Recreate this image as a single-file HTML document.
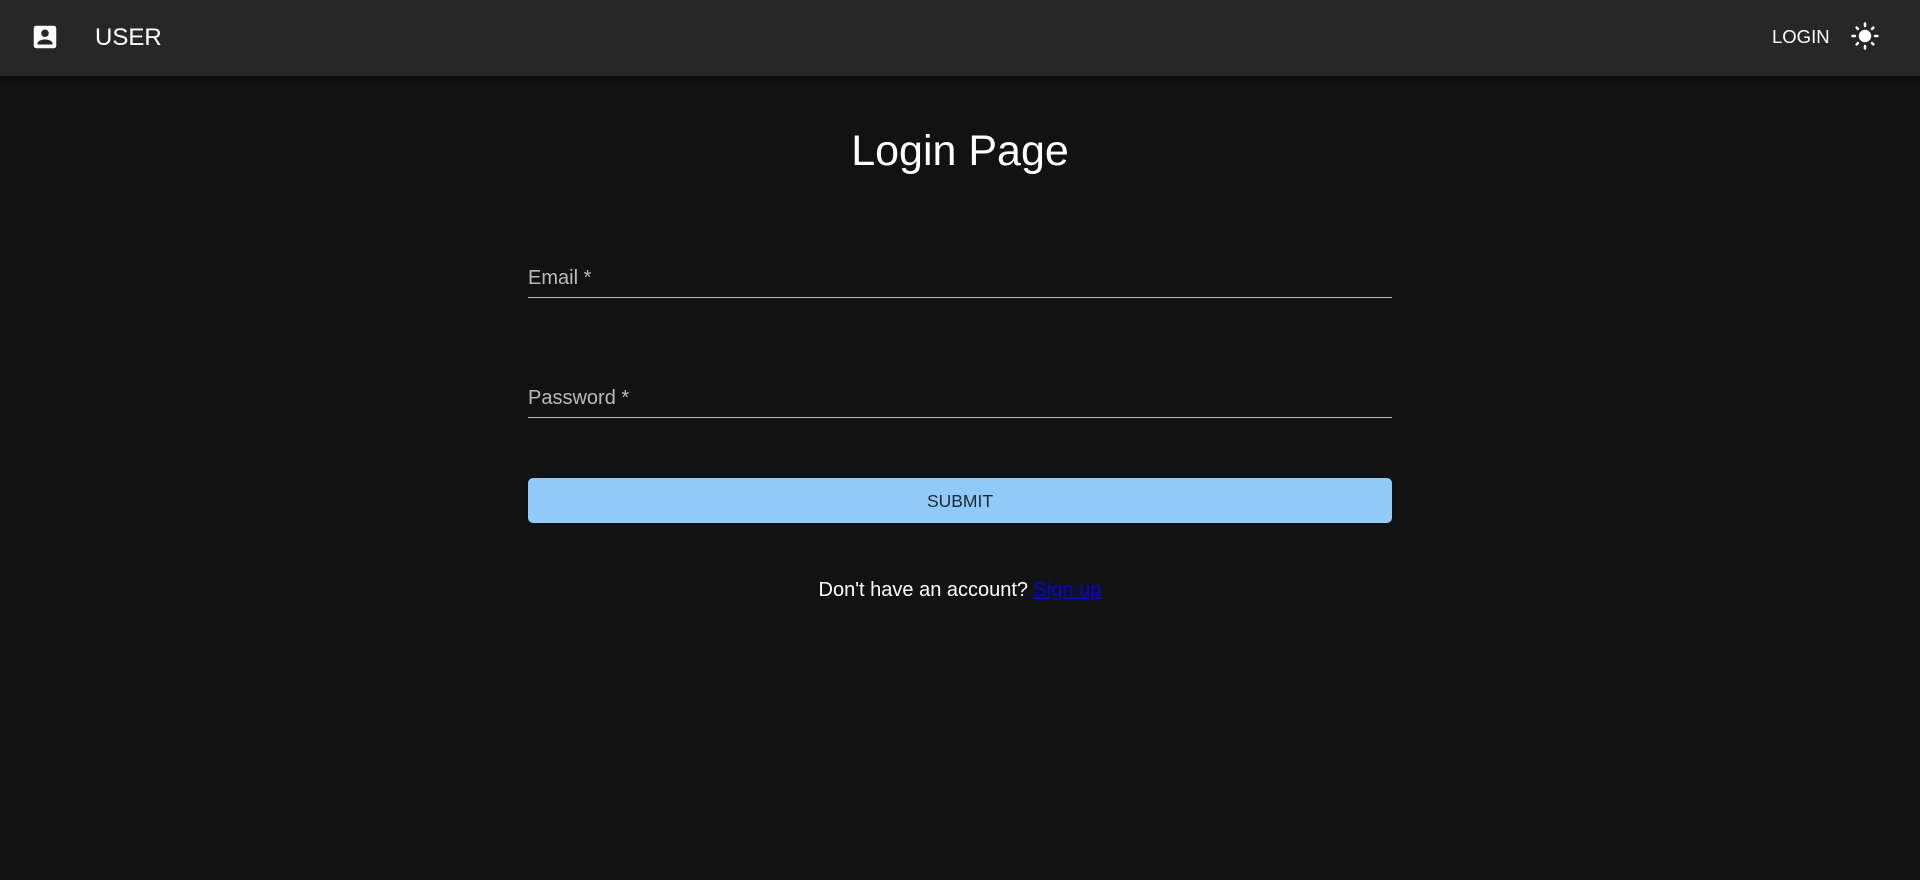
<!DOCTYPE html>
<html><head><meta charset="utf-8"><style>
*{margin:0;padding:0;box-sizing:border-box}
body{width:1920px;height:880px;background:#121212;font-family:"Liberation Sans",Arial,sans-serif;color:#fff;overflow:hidden;position:relative}
.hdr{position:absolute;left:0;top:0;width:1920px;height:76px;background:#272727;box-shadow:0 2px 5px rgba(0,0,0,.5)}
.abs{position:absolute;white-space:nowrap}
.lbl{color:rgba(255,255,255,.7);font-size:20px}
.line{position:absolute;left:528px;width:864px;height:1px;background:rgba(255,255,255,.7)}
</style></head><body>
<div class="hdr">
<svg class="abs" style="left:30px;top:22px" width="30" height="30" viewBox="0 0 24 24"><path fill="#fff" d="M3 5v14a2 2 0 0 0 2 2h14c1.1 0 2-.9 2-2V5c0-1.1-.9-2-2-2H5a2 2 0 0 0-2 2zm12 4c0 1.66-1.34 3-3 3s-3-1.34-3-3 1.34-3 3-3 3 1.34 3 3zm-9 8c0-2 4-3.1 6-3.1s6 1.1 6 3.1v1H6v-1z"/></svg>
<div class="abs" style="left:95px;top:24px;font-size:24px;line-height:28px">USER</div>
<div class="abs" style="left:1772px;top:25px;font-size:18.5px;line-height:24px">LOGIN</div>
<svg class="abs" style="left:1850px;top:21px" width="30" height="30" viewBox="0 0 24 24"><path fill="#fff" d="M12 7c-2.76 0-5 2.24-5 5s2.24 5 5 5 5-2.24 5-5-2.24-5-5-5zM2 13h2c.55 0 1-.45 1-1s-.45-1-1-1H2c-.55 0-1 .45-1 1s.45 1 1 1zm18 0h2c.55 0 1-.45 1-1s-.45-1-1-1h-2c-.55 0-1 .45-1 1s.45 1 1 1zM11 2v2c0 .55.45 1 1 1s1-.45 1-1V2c0-.55-.45-1-1-1s-1 .45-1 1zm0 18v2c0 .55.45 1 1 1s1-.45 1-1v-2c0-.55-.45-1-1-1s-1 .45-1 1zM5.99 4.58a.996.996 0 0 0-1.41 0 .996.996 0 0 0 0 1.41l1.06 1.06c.39.39 1.03.39 1.41 0s.39-1.03 0-1.41L5.99 4.58zm12.37 12.37a.996.996 0 0 0-1.41 0 .996.996 0 0 0 0 1.41l1.06 1.06c.39.39 1.03.39 1.41 0a.996.996 0 0 0 0-1.41l-1.06-1.06zm1.06-10.96a.996.996 0 0 0 0-1.41.996.996 0 0 0-1.41 0l-1.06 1.06c-.39.39-.39 1.03 0 1.41s1.03.39 1.41 0l1.06-1.06zM7.05 18.36a.996.996 0 0 0 0-1.41.996.996 0 0 0-1.41 0l-1.06 1.06c-.39.39-.39 1.03 0 1.41s1.03.39 1.41 0l1.06-1.06z"/></svg>
</div>
<div class="abs" style="left:0;width:1920px;text-align:center;top:125px;font-size:43px;line-height:52px">Login Page</div>
<div class="abs lbl" style="left:528px;top:266px;line-height:24px">Email *</div>
<div class="line" style="top:297px"></div>
<div class="abs lbl" style="left:528px;top:386px;line-height:24px">Password *</div>
<div class="line" style="top:417px"></div>
<div class="abs" style="left:528px;top:478px;width:864px;height:45px;background:#90caf9;border-radius:5px;box-shadow:0 2px 3px rgba(0,0,0,.3);color:rgba(0,0,0,.8);font-size:17.5px;line-height:46px;text-align:center">SUBMIT</div>
<div class="abs" style="left:0;width:1920px;text-align:center;top:578px;font-size:20px;line-height:24px">Don't have an account? <a href="#" style="color:#0000ee">Sign up</a></div>
</body></html>
